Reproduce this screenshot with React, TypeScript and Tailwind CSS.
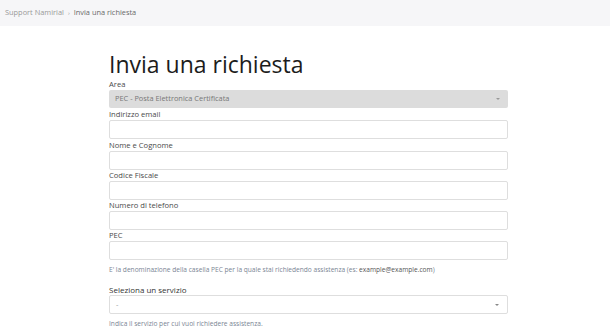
export default function App() {
  const fields = ["Indirizzo email", "Nome e Cognome", "Codice Fiscale", "Numero di telefono", "PEC"];

  return (
    <div className="min-h-[336px] bg-white font-['Open_Sans',sans-serif] text-[#333]">
      <div className="flex h-[26px] items-center bg-[#f6f6f8] px-[5px] text-[7.4px] text-[#999]">
        <span>Support Namirial</span>
        <span className="mx-[4px] text-[6px]">›</span>
        <span className="text-[#6a6a6a]">Invia una richiesta</span>
      </div>

      <div className="ml-[109px] w-[399px] pt-[23px]">
        <h1 className="text-[23px] leading-[30px] font-normal text-[#1c1c1c]">Invia una richiesta</h1>

        <label className="block text-[7.6px] leading-[11px] text-[#4a4a4a]">Area</label>
        <div className="flex h-[18px] items-center justify-between rounded-[2px] bg-[#dcdcdc] pl-[6px] pr-[8px] text-[7.4px] text-[#777]">
          <span>PEC - Posta Elettronica Certificata</span>
          <span className="h-0 w-0 border-x-[2px] border-t-[2px] border-x-transparent border-t-[#999]" />
        </div>

        {fields.map((f, i) => (
          <div key={f} className={i < 2 ? "pt-[1px]" : ""}>
            <label className="block text-[7.6px] leading-[11px] text-[#4a4a4a]">{f}</label>
            <div className="h-[19px] rounded-[2px] border border-[#dedede] bg-white" />
          </div>
        ))}

        <p className="mt-[5px] text-[6.6px] leading-[10px] text-[#7a8594]">
          E' la denominazione della casella PEC per la quale stai richiedendo assistenza (es:{" "}
          <span className="text-[#555]">example@example.com</span>)
        </p>

        <div className="mt-[9px]">
          <label className="block text-[8px] leading-[11px] text-[#333]">Seleziona un servizio</label>
          <div className="flex h-[19px] items-center justify-between rounded-[2px] border border-[#dedede] bg-white pl-[6px] pr-[8px] text-[7.4px] text-[#999]">
            <span>-</span>
            <span className="h-0 w-0 border-x-[2px] border-t-[2px] border-x-transparent border-t-[#888]" />
          </div>
          <p className="mt-[5px] text-[6.6px] leading-[10px] text-[#7a8594]">
            Indica il servizio per cui vuoi richiedere assistenza.
          </p>
        </div>
      </div>
    </div>
  );
}
